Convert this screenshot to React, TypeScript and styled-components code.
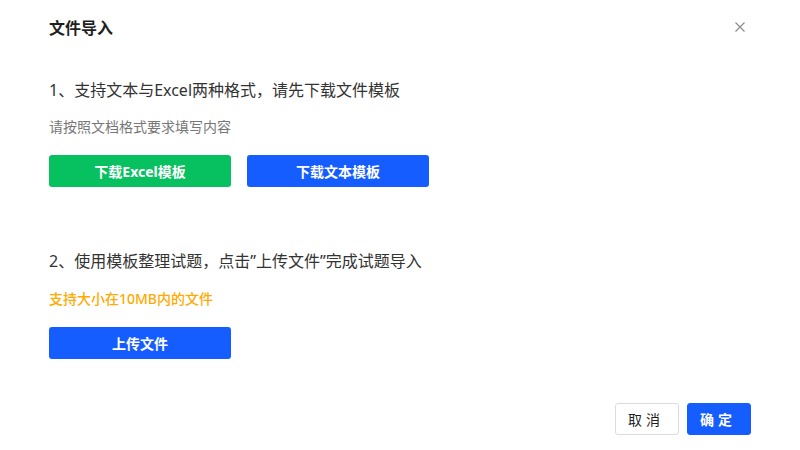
import React from "react";
import styled, { createGlobalStyle } from "styled-components";

const Global = createGlobalStyle`
  html, body { margin: 0; padding: 0; background: #fff; }
  body { font-family: "Noto Sans", "Noto Sans CJK SC", sans-serif; }
  * { box-sizing: border-box; }
`;

const Dialog = styled.div`
  width: 800px;
  height: 450px;
  background: #fff;
  display: flex;
  flex-direction: column;
  padding: 0 49px;
`;

const Header = styled.div`
  height: 54px;
  display: flex;
  align-items: center;
  justify-content: space-between;
`;

const Title = styled.div`
  font-size: 16px;
  font-weight: 700;
  color: #1f1f1f;
`;

const Close = styled.button`
  border: none;
  background: none;
  padding: 0;
  width: 12px;
  height: 12px;
  margin-right: 5px;
  cursor: pointer;
  display: flex;
`;

const Section = styled.div<{ $top: number }>`
  margin-top: ${(p) => p.$top}px;
  display: flex;
  flex-direction: column;
`;

const StepText = styled.div`
  font-size: 16px;
  line-height: 24px;
  color: #333;
`;

const Hint = styled.div<{ $color: string; $bold?: boolean; $gap: number }>`
  font-size: 14px;
  line-height: 20px;
  margin-top: ${(p) => p.$gap}px;
  color: ${(p) => p.$color};
  font-weight: ${(p) => (p.$bold ? 500 : 400)};
`;

const BtnRow = styled.div`
  display: flex;
  gap: 16px;
  margin-top: 18px;
`;

const FillButton = styled.button<{ $bg: string }>`
  width: 182px;
  height: 32px;
  border: none;
  border-radius: 3px;
  background: ${(p) => p.$bg};
  color: #fff;
  font-family: inherit;
  font-size: 14px;
  font-weight: 700;
  cursor: pointer;
`;

const Footer = styled.div`
  margin-top: auto;
  margin-bottom: 15px;
  display: flex;
  justify-content: flex-end;
  gap: 8px;
`;

const FooterButton = styled.button<{ $primary?: boolean }>`
  width: 64px;
  height: 32px;
  border-radius: 3px;
  font-family: inherit;
  font-size: 14px;
  font-weight: ${(p) => (p.$primary ? 700 : 400)};
  letter-spacing: 4px;
  padding-left: 4px;
  cursor: pointer;
  background: ${(p) => (p.$primary ? "#165dff" : "#fff")};
  color: ${(p) => (p.$primary ? "#fff" : "#1f1f1f")};
  border: 1px solid ${(p) => (p.$primary ? "#165dff" : "#dcdcdc")};
`;

export default function App() {
  return (
    <>
      <Global />
      <Dialog>
        <Header>
          <Title>文件导入</Title>
          <Close aria-label="close">
            <svg width="12" height="12" viewBox="0 0 12 12">
              <path d="M1.5 1.5 L10.5 10.5 M10.5 1.5 L1.5 10.5" stroke="#8c8c8c" strokeWidth="1.2" />
            </svg>
          </Close>
        </Header>
        <Section $top={24}>
          <StepText>1、支持文本与Excel两种格式，请先下载文件模板</StepText>
          <Hint $color="#777" $gap={15}>请按照文档格式要求填写内容</Hint>
          <BtnRow>
            <FillButton $bg="#07c160">下载Excel模板</FillButton>
            <FillButton $bg="#165dff">下载文本模板</FillButton>
          </BtnRow>
        </Section>
        <Section $top={62}>
          <StepText>2、使用模板整理试题，点击”上传文件”完成试题导入</StepText>
          <Hint $color="#ffaa00" $bold $gap={16}>支持大小在10MB内的文件</Hint>
          <BtnRow>
            <FillButton $bg="#165dff">上传文件</FillButton>
          </BtnRow>
        </Section>
        <Footer>
          <FooterButton>取消</FooterButton>
          <FooterButton $primary>确定</FooterButton>
        </Footer>
      </Dialog>
    </>
  );
}
